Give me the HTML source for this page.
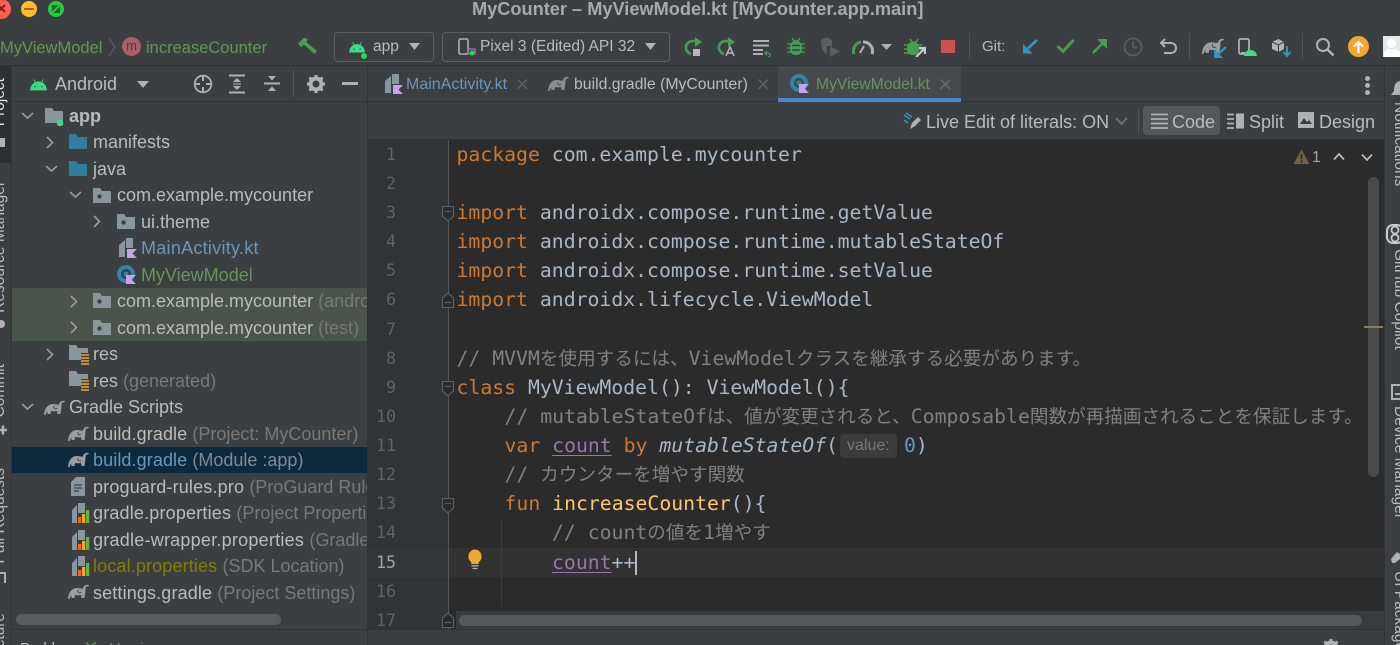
<!DOCTYPE html>
<html><head><meta charset="utf-8"><title>MyCounter</title>
<style>
html,body{margin:0;padding:0;background:#3c3f41;}
#r{position:relative;width:1400px;height:645px;overflow:hidden;background:#3c3f41;font-family:"Liberation Sans","Noto Sans CJK JP",sans-serif;color:#bbb;}
#r div,#r svg{position:absolute;}
.b{background:#2f3133;}
.t{white-space:pre;font-size:18px;line-height:26px;height:26px;}
.tb{white-space:pre;font-size:16.5px;line-height:24px;height:24px;margin-top:1px;}
.g{color:#787878;letter-spacing:0}
.ln{left:368px;width:28px;text-align:right;font:16.6px/29px "DejaVu Sans Mono",monospace;color:#606366;height:29px;}
.c{left:456.5px;white-space:pre;font:19.8px/29px "DejaVu Sans Mono","Noto Sans CJK JP",monospace;color:#a9b7c6;height:29px;}
.c span{position:static}
.k{color:#cc7832}.cm{color:#808080}.j{font-size:18.6px;font-family:"Noto Sans CJK JP",sans-serif}
.f{color:#ffc66d}.v{color:#9876aa;text-decoration:underline;text-underline-offset:3px}
.n{color:#6897bb}.i{font-style:italic}.p{color:#a9b7c6}
.vl{writing-mode:vertical-rl;white-space:pre;font-size:15.5px;line-height:16px;color:#bbb;}
.vr{transform:rotate(180deg);}
</style></head><body>
<svg width="0" height="0" style="position:absolute">
<defs>
<symbol id="el" viewBox="0 0 21 16"><path fill="currentColor" d="M0 15C0.500 8 4 4 9 4C11 4 13 5 15 4.500C15.500 1.500 18 0 21 1L20 2.500C18 2 17.500 3.500 17.500 5.500C17.500 8 17 10 16.500 14H13.500L13 11C11 11.500 9 11.500 7 11L6.500 14H3.500L3.200 11L1.500 15Z"/><path d="M10 6C9.500 8.500 11 9.500 13 8.500" fill="none" stroke="#3c3f41" stroke-width="0.900"/></symbol>
<symbol id="and" viewBox="0 0 16 12"><path fill="#3ddc84" d="M0 11.500C0.300 7.500 2.500 5 4.500 4L3.300 1.300L4 1L5.300 3.600C7 3 9 3 10.700 3.600L12 1L12.700 1.300L11.500 4C13.500 5 15.700 7.500 16 11.500Z"/><circle cx="4.800" cy="8" r="0.800" fill="#2b6b4a"/><circle cx="11.200" cy="8" r="0.800" fill="#2b6b4a"/></symbol>
<symbol id="fo" viewBox="0 0 18 15"><path fill="currentColor" d="M0 0H7L9 3H18V15H0Z"/></symbol>
<symbol id="pk" viewBox="0 0 18 15"><path fill="#88969d" d="M0 0H7L9 3H18V15H0Z"/><circle cx="6.500" cy="8.500" r="2.200" fill="#3c3f41"/></symbol>
<symbol id="kt" viewBox="0 0 18 20"><path fill="#88969d" d="M0 7L6 2V19H0ZM7 0H14V10H7Z"/><path fill="#c8a2f0" d="M8 11H18L13.500 15.500L18 20H8Z"/></symbol>
<symbol id="cl" viewBox="0 0 19 20"><circle cx="9" cy="9" r="9" fill="#2f84a8"/><circle cx="9" cy="9" r="5" fill="#3c3f41"/><circle cx="9" cy="9" r="2.500" fill="#2f84a8"/><path fill="#c8a2f0" d="M9 10H19L14.500 14.500L19 19H9Z"/></symbol>
<symbol id="pr" viewBox="0 0 18 20"><path fill="#88969d" d="M0 7L5 2V13H5V20H0ZM6 0H13V10H6Z"/><rect x="6" y="14" width="3.200" height="6" fill="#f26522"/><rect x="10" y="11" width="3.200" height="9" fill="#f5a623"/><rect x="14" y="7" width="3.200" height="13" fill="#62b543"/></symbol>
<symbol id="rs" viewBox="0 0 20 20"><path fill="#88969d" d="M0 0H7L9 3H19V8H12V15H0Z"/><path fill="#c68a2e" d="M12 9H20V11H12ZM12 12H20V14H12ZM12 15H20V17H12ZM12 18H20V20H12Z"/></symbol>
</defs></svg>
<div id="r">
<!-- title bar -->
<div style="left:-9px;top:-1px;width:20px;height:20px;border-radius:50%;background:#ff5f57"></div>
<svg style="left:-3px;top:4px" width="10" height="10"><path d="M1 1L8 8M8 1L1 8" stroke="#8a1f1a" stroke-width="2"/></svg>
<div style="left:21px;top:1px;width:16px;height:16px;border-radius:50%;background:#febc2e"></div>
<div style="left:24px;top:8px;width:10px;height:2px;background:#a06a10"></div>
<div style="left:48px;top:1px;width:16px;height:16px;border-radius:50%;background:#28c840"></div>
<svg style="left:51px;top:4px" width="10" height="10"><path d="M1 1H7.500L1 7.500ZM9 2.500V9H2.500Z" fill="#0b6a16"/></svg>
<div style="left:472px;top:-3px;font-size:18.2px;font-weight:bold;color:#a7a9aa;line-height:24px;white-space:pre">MyCounter – MyViewModel.kt [MyCounter.app.main]</div>

<!-- toolbar -->
<div class="tb" style="left:0;top:35px;color:#629755">MyViewModel</div>
<svg style="left:107px;top:36px" width="10" height="22"><path d="M2 2L8 11L2 20" fill="none" stroke="#5e6163" stroke-width="1"/></svg>
<div style="left:122px;top:37px;width:19px;height:19px;border-radius:50%;background:#a85f68"></div>
<div style="left:122px;top:36px;width:19px;text-align:center;font-size:13px;line-height:19px;color:#3c3f41">m</div>
<div class="tb" style="left:146px;top:35px;color:#629755">increaseCounter</div>
<svg style="left:297px;top:36px" width="22" height="20"><path d="M1 8L7 1.500L11 3.500L9 6L20 15L17.500 18L7 8.500L4.500 11Z" fill="#4e9c5a"/></svg>

<div style="left:334px;top:32px;width:98px;height:28px;border:1px solid #5e6060;border-radius:4px;box-sizing:content-box"></div>
<svg style="left:349px;top:41px" width="16" height="12"><use href="#and"/></svg>
<div style="left:361px;top:53px;width:6px;height:6px;background:#17e04a;border-radius:50%"></div>
<div class="tb" style="left:373px;top:34px;color:#bbb;font-size:15.500px">app</div>
<svg style="left:409px;top:43px" width="12" height="8"><path d="M0 0H11L5.500 7Z" fill="#afb1b3"/></svg>

<div style="left:442px;top:32px;width:226px;height:28px;border:1px solid #5e6060;border-radius:4px"></div>
<svg style="left:458px;top:38px" width="20" height="20"><rect x="1" y="1" width="9" height="15" rx="1.500" fill="none" stroke="#afb1b3" stroke-width="1.600"/><rect x="10" y="11" width="7" height="5" fill="none" stroke="#a86fb8" stroke-width="1.300"/><circle cx="14" cy="15" r="2.500" fill="#17e04a"/></svg>
<div class="tb" style="left:480px;top:34px;font-size:15.500px">Pixel 3 (Edited) API 32</div>
<svg style="left:645px;top:43px" width="12" height="8"><path d="M0 0H11L5.500 7Z" fill="#afb1b3"/></svg>

<svg style="left:683px;top:37px" width="20" height="20"><path d="M8 17A7 7 0 0 1 3 9A7 7 0 0 1 10 4H14" fill="none" stroke="#499c54" stroke-width="2.600"/><path d="M12 0L19 5L12 10Z" fill="#499c54"/><rect x="10" y="12" width="7" height="7" fill="#b5b8ba"/></svg>
<svg style="left:716px;top:37px" width="22" height="20"><path d="M8 17A7 7 0 0 1 3 9A7 7 0 0 1 10 4H14" fill="none" stroke="#499c54" stroke-width="2.600"/><path d="M12 0L19 5L12 10Z" fill="#499c54"/><path d="M10 19L14 10L18 19M11.500 16H16.500" fill="none" stroke="#b5b8ba" stroke-width="1.500"/></svg>
<svg style="left:752px;top:39px" width="20" height="18"><path d="M1 2H17M1 6.500H17M1 11H11M1 15H11" stroke="#afb1b3" stroke-width="2"/><path d="M15 12L13 14L15 16M13 14H16A2 2 0 0 1 16 18" fill="none" stroke="#499c54" stroke-width="1.300"/></svg>
<svg style="left:786px;top:36px" width="20" height="20"><path d="M6 2L8 5H12L14 2" fill="none" stroke="#499c54" stroke-width="1.500"/><rect x="4" y="5" width="12" height="14" rx="5" fill="#499c54"/><path d="M1 8H19M1 12H19M1 16H19" stroke="#499c54" stroke-width="1.500"/><path d="M6 9.500H14M6 14H14" stroke="#3c3f41" stroke-width="1.500"/></svg>
<svg style="left:820px;top:37px" width="22" height="20"><path d="M1 3L7 0L12 3V9H7V17L2 13Z" fill="#5a5e60"/><path d="M10 9L20 14.500L10 20Z" fill="#5a5e60"/></svg>
<svg style="left:852px;top:39px" width="22" height="16"><path d="M2 15A9 9 0 0 1 9 3" fill="none" stroke="#499c54" stroke-width="3"/><path d="M11 3A9 9 0 0 1 20 15" fill="none" stroke="#afb1b3" stroke-width="3"/><path d="M8 14L12 7" stroke="#afb1b3" stroke-width="2"/></svg>
<svg style="left:881px;top:44px" width="12" height="8"><path d="M0 0H11L5.500 6Z" fill="#afb1b3"/></svg>
<svg style="left:904px;top:37px" width="22" height="20"><path d="M6 2L8 5H12L14 2" fill="none" stroke="#499c54" stroke-width="1.500"/><rect x="3" y="5" width="12" height="13" rx="5" fill="#499c54"/><path d="M0 8H18M0 12H18M0 16H14" stroke="#499c54" stroke-width="1.500"/><path d="M12 20L20 12M15 11H21V17" fill="none" stroke="#c9cbcc" stroke-width="2.200"/></svg>
<div style="left:941px;top:40px;width:14px;height:13px;background:#c75450"></div>
<div style="left:969px;top:33px;width:1px;height:26px;background:#515456"></div>
<div class="tb" style="left:982px;top:34px;font-size:15px">Git:</div>
<svg style="left:1022px;top:38px" width="18" height="17"><path d="M15 2L3 13" stroke="#3592c4" stroke-width="2.600"/><path d="M1 6V15.500H10.500Z" fill="#3592c4"/></svg>
<svg style="left:1056px;top:38px" width="19" height="16"><path d="M1.500 8L7 13.500L17.500 2" fill="none" stroke="#499c54" stroke-width="3"/></svg>
<svg style="left:1090px;top:38px" width="18" height="17"><path d="M3 15L15 3" stroke="#499c54" stroke-width="2.600"/><path d="M7 1H17V11Z" fill="#499c54"/></svg>
<svg style="left:1123px;top:37px" width="20" height="20"><circle cx="10" cy="10" r="8.500" fill="none" stroke="#5a5d5f" stroke-width="1.800"/><path d="M10 4.500V10.500H14.500" fill="none" stroke="#5a5d5f" stroke-width="1.800"/></svg>
<svg style="left:1160px;top:38px" width="18" height="17"><path d="M5 1L1 5L5 9M1 5H11A5 5 0 0 1 11 15H4" fill="none" stroke="#afb1b3" stroke-width="2"/></svg>
<div style="left:1189px;top:33px;width:1px;height:26px;background:#515456"></div>
<svg style="left:1201px;top:38px" width="26" height="20"><g style="color:#9a9ea0"><use href="#el" width="24" height="17" x="0" y="0"/></g><path d="M25 9L16 17" stroke="#3592c4" stroke-width="2.500"/><path d="M13 11V20H22Z" fill="#3592c4"/></svg>
<svg style="left:1238px;top:38px" width="20" height="20"><rect x="1" y="1" width="10" height="15" rx="1.500" fill="none" stroke="#afb1b3" stroke-width="1.700"/><rect x="3" y="14" width="4" height="2" fill="#afb1b3"/><path d="M6 18C6.500 14 9 12 12.500 12C16 12 18.500 14 19 18Z" fill="#3ddc84"/></svg>
<svg style="left:1271px;top:38px" width="20" height="20"><path d="M1 4L7.500 1L13 4V11L7.500 14L1 11Z" fill="#afb1b3"/><path d="M1 4L7.500 7L13 4M7.500 7V14" stroke="#3c3f41" stroke-width="1" fill="none"/><path d="M16 8V17M12.500 14L16 18L19.500 14" fill="none" stroke="#3592c4" stroke-width="2"/></svg>
<div style="left:1302px;top:33px;width:1px;height:26px;background:#515456"></div>
<svg style="left:1315px;top:37px" width="20" height="20"><circle cx="8" cy="8" r="6" fill="none" stroke="#afb1b3" stroke-width="2"/><path d="M12.500 12.500L18.500 18.500" stroke="#afb1b3" stroke-width="2.500"/></svg>
<div style="left:1348px;top:36px;width:21px;height:21px;border-radius:50%;background:#f0a732"></div>
<svg style="left:1352px;top:40px" width="13" height="14"><path d="M6.500 13V2M2 6.500L6.500 2L11 6.500" fill="none" stroke="#fff" stroke-width="2"/></svg>
<div style="left:1383px;top:36px;width:17px;height:21px;background:#e6e6e6"></div>
<div style="left:1387px;top:39px;width:9px;height:9px;border-radius:50%;background:#fff"></div>
<div style="left:1384px;top:49px;width:16px;height:8px;border-radius:5px 5px 0 0;background:#fff"></div>

<div class="b" style="left:0;top:65px;width:1400px;height:1px"></div>

<!-- left strip -->
<div style="left:0;top:66px;width:12px;height:579px;background:#3c3f41"></div>
<div style="left:0;top:66px;width:11px;height:97px;background:#2d2f30"></div>
<div style="left:11px;top:66px;width:1px;height:579px;background:#323436"></div>
<div class="vl vr" style="left:-8px;top:78px;color:#e0e0e0">Project</div>
<div style="left:0;top:138px;width:5px;height:9px;background:#afb1b3"></div>
<div class="vl vr" style="left:-8px;top:181px;">Resource Manager</div>
<div style="left:-3px;top:320px;width:8px;height:8px;border-radius:50%;background:#afb1b3"></div>
<div class="vl vr" style="left:-8px;top:364px;">Commit</div>
<svg style="left:0;top:423px" width="8" height="14"><path d="M0 7H7M3 2.500V11.500" stroke="#afb1b3" stroke-width="2.500"/></svg>
<div class="vl vr" style="left:-8px;top:468px;">Pull Requests</div>
<svg style="left:0;top:571px;" width="8" height="13"><path d="M0 2H5V12" fill="none" stroke="#afb1b3" stroke-width="2"/></svg>
<div class="vl vr" style="left:-8px;top:613px;">Structure</div>

<!-- project header -->
<svg style="left:30px;top:78px" width="17" height="13"><use href="#and"/></svg>
<div class="t" style="left:55px;top:71px">Android</div>
<svg style="left:137px;top:81px" width="13" height="8"><path d="M0 0H12L6 7Z" fill="#afb1b3"/></svg>
<svg style="left:193px;top:74px" width="20" height="20"><circle cx="10" cy="10" r="8.300" fill="none" stroke="#afb1b3" stroke-width="1.800"/><path d="M10 1V7M10 13V19M1 10H7M13 10H19" stroke="#afb1b3" stroke-width="2"/></svg>
<svg style="left:228px;top:74px" width="18" height="20"><path d="M1 1.500H17M1 18.500H17" stroke="#afb1b3" stroke-width="2"/><path d="M9 4L13 8H5ZM9 16L13 12H5Z" fill="#afb1b3"/><path d="M5 10H13" stroke="#afb1b3" stroke-width="1"/></svg>
<svg style="left:263px;top:75px" width="18" height="18"><path d="M1 8.500H17" stroke="#afb1b3" stroke-width="2"/><path d="M5 1H13L9 5.500ZM5 16H13L9 11.500Z" fill="#afb1b3"/></svg>
<div style="left:293px;top:70px;width:1px;height:27px;background:#515456"></div>
<svg style="left:307px;top:75px" width="18" height="18"><circle cx="9" cy="9" r="5.500" fill="none" stroke="#afb1b3" stroke-width="4"/><path d="M9 0V4M9 14V18M0 9H4M14 9H18M2.500 2.500L5 5M13 13L15.500 15.500M15.500 2.500L13 5M5 13L2.500 15.500" stroke="#afb1b3" stroke-width="3"/></svg>
<div style="left:342px;top:82px;width:16px;height:3px;background:#afb1b3"></div>
<div class="b" style="left:12px;top:101px;width:355px;height:1px"></div>
<div class="b" style="left:367px;top:66px;width:1px;height:579px"></div>

<!-- tree highlights -->
<div style="left:12px;top:288px;width:355px;height:53px;background:#49544a"></div>
<div style="left:12px;top:447px;width:355px;height:26px;background:#0d293e"></div>

<!-- tree chevrons -->
<svg style="left:0;top:102px" width="120" height="310" fill="none" stroke="#9a9da0" stroke-width="1.600">
<path d="M22 11L27.500 16L33 11"/><path d="M47 35L52.500 40.500L47 46"/><path d="M46 64L51.500 69L57 64"/><path d="M70 90L75.500 95L81 90"/><path d="M94 114L99.500 119.500L94 125"/><path d="M71 194L76.500 199.500L71 205"/><path d="M71 220L76.500 225.500L71 231"/><path d="M47 247L52.500 252.500L47 258"/><path d="M22 302L27.500 307L33 302"/>
</svg>

<!-- tree rows -->
<svg style="left:45px;top:108px" width="22" height="18"><path fill="#88969d" d="M0 0H7L9 3H18V15H0Z"/><circle cx="15" cy="15" r="3.300" fill="#3ddc84"/></svg>
<div class="t" style="left:69px;top:103px;font-weight:bold">app</div>
<svg style="left:69px;top:134px;color:#2f7e9e" width="18" height="15"><use href="#fo"/></svg>
<div class="t" style="left:93px;top:129px">manifests</div>
<svg style="left:69px;top:161px;color:#2f7e9e" width="18" height="15"><use href="#fo"/></svg>
<div class="t" style="left:93px;top:156px">java</div>
<svg style="left:93px;top:188px" width="18" height="15"><use href="#pk"/></svg>
<div class="t" style="left:117px;top:182px">com.example.mycounter</div>
<svg style="left:117px;top:214px" width="18" height="15"><use href="#pk"/></svg>
<div class="t" style="left:141px;top:209px">ui.theme</div>
<svg style="left:119px;top:238px" width="18" height="20"><use href="#kt"/></svg>
<div class="t" style="left:141px;top:235px;color:#6897bb;letter-spacing:.27px">MainActivity.kt</div>
<svg style="left:117px;top:265px" width="19" height="20"><use href="#cl"/></svg>
<div class="t" style="left:141px;top:262px;color:#629755">MyViewModel</div>
<svg style="left:93px;top:293px" width="18" height="15"><use href="#pk"/></svg>
<div style="left:117px;top:288px;width:250px;height:28px;overflow:hidden"><div class="t" style="left:0;top:0">com.example.mycounter <span class="g">(androidTest)</span></div></div>
<svg style="left:93px;top:320px" width="18" height="15"><use href="#pk"/></svg>
<div class="t" style="left:117px;top:315px">com.example.mycounter <span class="g">(test)</span></div>
<svg style="left:69px;top:345px" width="20" height="20"><use href="#rs"/></svg>
<div class="t" style="left:93px;top:341px">res</div>
<svg style="left:69px;top:371px" width="20" height="20"><use href="#rs"/></svg>
<div class="t" style="left:93px;top:368px">res <span class="g">(generated)</span></div>
<svg style="left:44px;top:400px;color:#9a9ea0" width="21" height="16"><use href="#el"/></svg>
<div class="t" style="left:69px;top:394px">Gradle Scripts</div>
<svg style="left:68px;top:426px;color:#9a9ea0" width="21" height="16"><use href="#el"/></svg>
<div class="t" style="left:93px;top:421px;letter-spacing:.1px">build.gradle <span class="g">(Project: MyCounter)</span></div>
<svg style="left:68px;top:452px;color:#9a9ea0" width="21" height="16"><use href="#el"/></svg>
<div class="t" style="left:93px;top:447px;color:#6897bb;letter-spacing:.1px">build.gradle <span class="g" style="color:#7d8b96">(Module :app)</span></div>
<svg style="left:71px;top:477px" width="15" height="19"><path fill="#88969d" d="M5 0H14V19H0V5Z"/><path d="M3 8H11M3 11H11M3 14H8" stroke="#3c3f41" stroke-width="1.200"/></svg>
<div class="t" style="left:93px;top:474px;width:274px;overflow:hidden;letter-spacing:.17px">proguard-rules.pro <span class="g">(ProGuard Rules for ":app")</span></div>
<svg style="left:72px;top:503px" width="18" height="20"><use href="#pr"/></svg>
<div class="t" style="left:93px;top:500px;width:274px;overflow:hidden;letter-spacing:.18px">gradle.properties <span class="g">(Project Properties)</span></div>
<svg style="left:72px;top:530px" width="18" height="20"><use href="#pr"/></svg>
<div class="t" style="left:93px;top:527px;width:274px;overflow:hidden;letter-spacing:.24px">gradle-wrapper.properties <span class="g">(Gradle Version)</span></div>
<svg style="left:72px;top:556px" width="18" height="20"><use href="#pr"/></svg>
<div class="t" style="left:93px;top:553px;color:#808000;letter-spacing:.14px">local.properties <span class="g">(SDK Location)</span></div>
<svg style="left:68px;top:584px;color:#9a9ea0" width="21" height="16"><use href="#el"/></svg>
<div class="t" style="left:93px;top:580px;letter-spacing:.14px">settings.gradle <span class="g">(Project Settings)</span></div>
<div style="left:16px;top:614px;width:265px;height:11px;border-radius:6px;background:#595b5d"></div>
<div class="b" style="left:12px;top:629px;width:1372px;height:1px"></div>
<div style="left:20px;top:637px;font-size:15px;line-height:24px;white-space:pre;color:#bbb">Problems</div>
<svg style="left:85px;top:642px" width="14" height="4"><path d="M1 0L5 5L11 0" fill="none" stroke="#499c54" stroke-width="1.500"/></svg>
<div style="left:110px;top:637px;font-size:15px;line-height:24px;white-space:pre;color:#787878">Version</div>

<!-- tabs -->
<svg style="left:385px;top:74px" width="18" height="20"><use href="#kt"/></svg>
<div class="tb" style="left:406px;top:72px;font-size:16px;color:#6897bb">MainActivity.kt</div>
<svg style="left:516px;top:78px" width="13" height="13"><path d="M1.500 1.500L11 11M11 1.500L1.500 11" stroke="#5f6264" stroke-width="1.300"/></svg>
<svg style="left:548px;top:76px;color:#8a8e90" width="21" height="16"><use href="#el"/></svg>
<div class="tb" style="left:574px;top:72px;font-size:15.8px">build.gradle (MyCounter)</div>
<svg style="left:757px;top:78px" width="13" height="13"><path d="M1.500 1.500L11 11M11 1.500L1.500 11" stroke="#5f6264" stroke-width="1.300"/></svg>
<div style="left:778px;top:66px;width:183px;height:32px;background:#45494b"></div>
<div style="left:778px;top:98px;width:183px;height:4px;background:#4a88c7"></div>
<svg style="left:790px;top:74px" width="19" height="20"><circle cx="9" cy="9" r="9" fill="#2f84a8"/><circle cx="9" cy="9" r="5" fill="#45494b"/><circle cx="9" cy="9" r="2.500" fill="#2f84a8"/><path fill="#c8a2f0" d="M9 10H19L14.500 14.500L19 19H9Z"/></svg>
<div class="tb" style="left:816px;top:72px;font-size:15.7px;color:#629755">MyViewModel.kt</div>
<svg style="left:939px;top:78px" width="13" height="13"><path d="M1.500 1.500L11 11M11 1.500L1.500 11" stroke="#6a6d6f" stroke-width="1.300"/></svg>
<div style="left:1365px;top:76px;width:5px;height:5px;border-radius:50%;background:#afb1b3"></div>
<div style="left:1365px;top:83px;width:5px;height:5px;border-radius:50%;background:#afb1b3"></div>
<div style="left:1365px;top:90px;width:5px;height:5px;border-radius:50%;background:#afb1b3"></div>
<div class="b" style="left:368px;top:101px;width:410px;height:1px"></div>
<div class="b" style="left:961px;top:101px;width:423px;height:1px"></div>

<!-- sub toolbar -->
<svg style="left:903px;top:112px" width="20" height="19"><path d="M1 3L7 7M3 1L9 5M1 8L5 11" stroke="#3592c4" stroke-width="1.500"/><path d="M7 17L9 11L15 5L18 8L12 14Z" fill="#afb1b3"/></svg>
<div class="t" style="left:926px;top:109px">Live Edit of literals: ON</div>
<svg style="left:1115px;top:117px" width="13" height="9"><path d="M1 1L6.500 7L12 1" fill="none" stroke="#787a7c" stroke-width="1.600"/></svg>
<div style="left:1138px;top:108px;width:1px;height:26px;background:#515456"></div>
<div style="left:1143px;top:106px;width:77px;height:29px;border-radius:4px;background:#54585a"></div>
<svg style="left:1151px;top:113px" width="17" height="16"><path d="M0 1.500H17M0 6H17M0 10.500H17M0 15H17" stroke="#afb1b3" stroke-width="1.700"/></svg>
<div class="t" style="left:1172px;top:109px">Code</div>
<svg style="left:1227px;top:113px" width="17" height="16"><path d="M0 1.500H7M0 6H7M0 10.500H7M0 15H7" stroke="#afb1b3" stroke-width="1.700"/><rect x="9" y="0.500" width="8" height="15" fill="#afb1b3"/></svg>
<div class="t" style="left:1249px;top:109px">Split</div>
<svg style="left:1298px;top:112px" width="16" height="16"><rect width="16" height="16" fill="#afb1b3"/><path d="M2 12L6 6L9 10L11 8L14 12Z" fill="#3c3f41"/></svg>
<div class="t" style="left:1319px;top:109px">Design</div>
<div class="b" style="left:368px;top:139px;width:1016px;height:1px"></div>

<!-- editor -->
<div style="left:368px;top:140px;width:1016px;height:489px;background:#2b2b2b"></div>
<div style="left:368px;top:140px;width:80px;height:489px;background:#313335"></div>
<div style="left:448px;top:140px;width:1px;height:489px;background:#555"></div>
<div style="left:449px;top:548px;width:935px;height:29px;background:#323232"></div>
<div style="left:368px;top:548px;width:80px;height:29px;background:#333537"></div>
<div style="left:501px;top:519px;width:1px;height:87px;background:#3b3b3b"></div>

<div class="ln" style="top:140px">1</div>
<div class="ln" style="top:169px">2</div>
<div class="ln" style="top:198px">3</div>
<div class="ln" style="top:227px">4</div>
<div class="ln" style="top:256px">5</div>
<div class="ln" style="top:285px">6</div>
<div class="ln" style="top:315px">7</div>
<div class="ln" style="top:344px">8</div>
<div class="ln" style="top:373px">9</div>
<div class="ln" style="top:402px">10</div>
<div class="ln" style="top:431px">11</div>
<div class="ln" style="top:460px">12</div>
<div class="ln" style="top:489px">13</div>
<div class="ln" style="top:518px">14</div>
<div class="ln" style="top:548px;color:#a4a3a3">15</div>
<div class="ln" style="top:577px">16</div>
<div class="ln" style="top:606px">17</div>

<!-- folds -->
<svg style="left:441px;top:205px" width="14" height="18"><path d="M1.500 1.500H12.500V11L7 16L1.500 11Z" fill="#2b2b2b" stroke="#5e6163" stroke-width="1.100"/><path d="M4 6.500H10" stroke="#5e6163"/></svg>
<svg style="left:441px;top:291px" width="14" height="18"><path d="M1.500 16.500H12.500V7L7 2L1.500 7Z" fill="#2b2b2b" stroke="#5e6163" stroke-width="1.100"/><path d="M4 11.500H10" stroke="#5e6163"/></svg>
<svg style="left:441px;top:380px" width="14" height="18"><path d="M1.500 1.500H12.500V11L7 16L1.500 11Z" fill="#2b2b2b" stroke="#5e6163" stroke-width="1.100"/><path d="M4 6.500H10" stroke="#5e6163"/></svg>
<svg style="left:441px;top:497px" width="14" height="18"><path d="M1.500 1.500H12.500V11L7 16L1.500 11Z" fill="#2b2b2b" stroke="#5e6163" stroke-width="1.100"/><path d="M4 6.500H10" stroke="#5e6163"/></svg>
<svg style="left:441px;top:611px" width="14" height="18"><path d="M1.500 16.500H12.500V7L7 2L1.500 7Z" fill="#2b2b2b" stroke="#5e6163" stroke-width="1.100"/><path d="M4 11.500H10" stroke="#5e6163"/></svg>

<!-- code -->
<div class="c" style="top:140px"><span class="k">package</span> com.example.mycounter</div>
<div class="c" style="top:198px"><span class="k">import</span> androidx.compose.runtime.getValue</div>
<div class="c" style="top:227px"><span class="k">import</span> androidx.compose.runtime.mutableStateOf</div>
<div class="c" style="top:256px"><span class="k">import</span> androidx.compose.runtime.setValue</div>
<div class="c" style="top:285px"><span class="k">import</span> androidx.lifecycle.ViewModel</div>
<div class="c cm" style="top:343px">// MVVM<span class="j">を使用するには、</span>ViewModel<span class="j">クラスを継承する必要があります。</span></div>
<div class="c" style="top:373px"><span class="k">class</span> MyViewModel(): ViewModel(){</div>
<div class="c cm" style="top:401px;left:504.5px">// mutableStateOf<span class="j">は、値が変更されると、</span>Composable<span class="j">関数が再描画されることを保証します。</span></div>
<div class="c" style="top:431px;left:504.5px"><span class="k">var</span> <span class="v">count</span> <span class="k">by</span> <span class="i">mutableStateOf</span>(</div>
<div style="left:840px;top:434px;width:57px;height:24px;border-radius:4px;background:#3b3b3b"></div>
<div style="left:847px;top:434px;font-size:16px;line-height:24px;color:#787878">value:</div>
<div class="c" style="top:431px;left:904px"><span class="n">0</span>)</div>
<div class="c cm" style="top:459px;left:504.5px">// <span class="j">カウンターを増やす関数</span></div>
<div class="c" style="top:489px;left:504.5px"><span class="k">fun</span> <span class="f">increaseCounter</span>(){</div>
<div class="c cm" style="top:517px;left:552px">// count<span class="j">の値を</span>1<span class="j">増やす</span></div>
<div class="c" style="top:548px;left:552px"><span class="v">count</span>++</div>
<div style="left:635px;top:551px;width:2px;height:24px;background:#bbb"></div>
<svg style="left:467px;top:549px" width="16" height="21"><path d="M8 0.500A7 7 0 0 1 12 13L11.500 15H4.500L4 13A7 7 0 0 1 8 0.500Z" fill="#f0a732"/><path d="M4.500 16.800H11.500M5.500 19.500H10.500" stroke="#afb1b3" stroke-width="1.300"/></svg>

<!-- inspections -->
<svg style="left:1293px;top:149px" width="17" height="15"><path d="M8.500 0.500L16.500 15H0.500Z" fill="#6e6243"/><path d="M8.500 5V10M8.500 11.500V13.500" stroke="#2b2b2b" stroke-width="1.800"/></svg>
<div style="left:1312px;top:146px;font-size:15.500px;line-height:24px;color:#a9a9a9">1</div>
<svg style="left:1333px;top:152px" width="12" height="9"><path d="M1 7.500L6 2L11 7.500" fill="none" stroke="#bbb" stroke-width="1.700"/></svg>
<svg style="left:1361px;top:153px" width="12" height="9"><path d="M1 1.500L6 7L11 1.500" fill="none" stroke="#bbb" stroke-width="1.700"/></svg>

<!-- scrollbars -->
<div style="left:1368px;top:177px;width:11px;height:300px;border-radius:6px;background:#4a4a4a"></div>
<div style="left:1364px;top:326px;width:19px;height:2px;background:#8a7f58"></div>
<div style="left:456px;top:611px;width:928px;height:18px;background:#3a3b3c"></div>
<div style="left:459px;top:615px;width:903px;height:11px;border-radius:6px;background:#555758"></div>

<!-- right strip -->
<div style="left:1384px;top:66px;width:16px;height:579px;background:#3c3f41"></div>
<div class="b" style="left:1384px;top:66px;width:1px;height:579px"></div>
<svg style="left:1391px;top:81px" width="9" height="16"><path d="M9 0C4 1 3 5 3 10L0 14H9Z" fill="#afb1b3"/></svg>
<div class="vl" style="left:1391px;top:102px">Notifications</div>
<svg style="left:1386px;top:224px" width="14" height="20"><rect x="1" y="1" width="16" height="18" rx="6" fill="none" stroke="#c9cbcc" stroke-width="2"/><circle cx="9" cy="6" r="3.500" fill="none" stroke="#c9cbcc" stroke-width="1.800"/><circle cx="9" cy="14" r="3.500" fill="none" stroke="#c9cbcc" stroke-width="1.800"/></svg>
<div class="vl" style="left:1391px;top:249px">GitHub Copilot</div>
<svg style="left:1391px;top:384px" width="9" height="17"><path d="M9 1H1V15H9M4 10H9" fill="none" stroke="#afb1b3" stroke-width="2"/></svg>
<div class="vl" style="left:1391px;top:406px">Device Manager</div>
<svg style="left:1390px;top:551px" width="10" height="13"><path d="M1 8L7 1L10 3V8L5 12L2 12Z" fill="#afb1b3"/></svg>
<div class="vl" style="left:1391px;top:571px">UI Packages</div>

<!-- bottom gear -->
<svg style="left:1322px;top:639px" width="18" height="18"><circle cx="9" cy="9" r="5.500" fill="none" stroke="#afb1b3" stroke-width="4"/><path d="M9 0V4M2.500 2.500L5 5M15.500 2.500L13 5" stroke="#afb1b3" stroke-width="3"/></svg>
</div>
</body></html>
